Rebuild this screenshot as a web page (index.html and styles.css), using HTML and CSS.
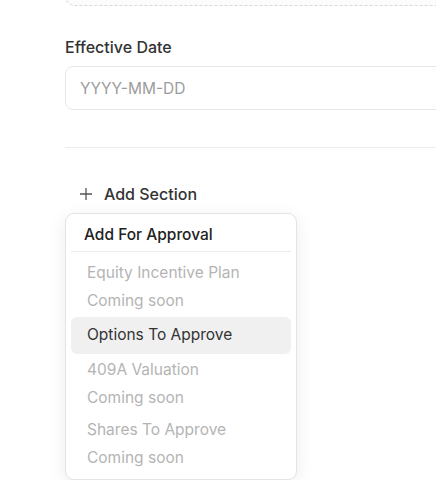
FILE: index.html
```html
<!DOCTYPE html>
<html lang="en">
  <head>
    <meta charset="UTF-8" />
    <meta name="viewport" content="width=device-width, initial-scale=1.0" />
    <title>Board Consent</title>
    <link rel="stylesheet" href="styles.css">
  </head>
  <body>
    <main class="form">
      <div class="dropzone"></div>

      <div class="field">
        <label for="effective_date">Effective Date</label>
        <input
          type="text"
          id="effective_date"
          name="effective_date"
          placeholder="YYYY-MM-DD"
        />
      </div>

      <hr class="divider" />

      <div class="add-section">
        <button type="button" class="add-btn">
          <svg width="14" height="14" viewBox="0 0 14 14" aria-hidden="true">
            <path d="M7 1v12M1 7h12" stroke="currentColor" stroke-width="1.3" fill="none" />
          </svg>
          <span>Add Section</span>
        </button>

        <div class="menu">
          <div class="menu-title">Add For Approval</div>
          <div class="menu-sep"></div>
          <div class="menu-item disabled">
            <span>Equity Incentive Plan</span>
            <span>Coming soon</span>
          </div>
          <div class="menu-item active">
            <span>Options To Approve</span>
          </div>
          <div class="menu-item disabled">
            <span>409A Valuation</span>
            <span>Coming soon</span>
          </div>
          <div class="menu-item disabled">
            <span>Shares To Approve</span>
            <span>Coming soon</span>
          </div>
        </div>
      </div>
    </main>
  </body>
</html>
```

FILE: styles.css
```css
body {
  margin: 0;
  font-family: Inter, "Noto Sans", sans-serif;
  color: #333;
  background: #fff;
  overflow: hidden;
}
.form {
  width: 440px;
  padding-left: 65px;
}
.dropzone {
  height: 100px;
  margin-top: -96px;
  border: 1px dashed #d8d8d8;
  border-radius: 10px;
  background: #fcfcfc;
}
.field {
  margin-top: 31px;
}
label {
  display: block;
  font-size: 16px;
  line-height: 20px;
  font-weight: 500;
  color: #333;
  margin-bottom: 9px;
}
input {
  display: block;
  width: 100%;
  height: 44px;
  box-sizing: border-box;
  padding: 0 14px;
  border: 1px solid #e6e6e6;
  border-radius: 8px;
  font-family: inherit;
  font-size: 15.5px;
  color: #333;
  outline: none;
}
input::placeholder {
  color: #9c9c9c;
}
.divider {
  border: none;
  border-top: 1px solid #ececec;
  margin: 37px 0 0;
}
.add-section {
  padding-top: 34px;
}
.add-btn {
  display: flex;
  align-items: center;
  gap: 11px;
  padding: 0 0 0 14px;
  height: 24px;
  border: none;
  background: none;
  font-family: inherit;
  font-size: 16px;
  font-weight: 500;
  color: #333;
  cursor: pointer;
}
.add-btn svg {
  color: #555;
}
.menu {
  margin-top: 7px;
  width: 232px;
  box-sizing: border-box;
  padding: 5px;
  border: 1px solid #e4e4e4;
  border-radius: 9px;
  background: #fff;
  box-shadow: 0 4px 18px rgba(0, 0, 0, 0.08);
}
.menu-title {
  padding: 4px 13px;
  line-height: 24px;
  font-size: 15.5px;
  font-weight: 500;
  color: #222;
}
.menu-sep {
  height: 1px;
  background: #ececec;
  margin-bottom: 5px;
}
.menu-item {
  display: flex;
  flex-direction: column;
  gap: 4px;
  padding: 4px 16px;
  font-size: 15.5px;
  line-height: 24px;
  border-radius: 6px;
}
.menu-item.disabled {
  color: #b4b4b4;
}
.menu-item.active {
  padding-top: 6px;
  padding-bottom: 7px;
  background: #f0f0f0;
  color: #333;
}
```
